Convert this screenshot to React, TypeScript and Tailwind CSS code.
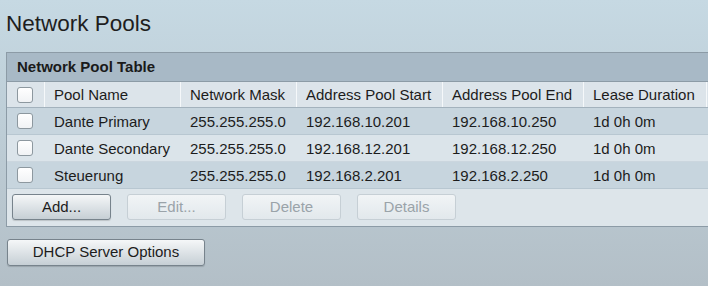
import React from 'react';

const COLS = ['Pool Name', 'Network Mask', 'Address Pool Start', 'Address Pool End', 'Lease Duration'];

const ROWS = [
  ['Dante Primary', '255.255.255.0', '192.168.10.201', '192.168.10.250', '1d 0h 0m'],
  ['Dante Secondary', '255.255.255.0', '192.168.12.201', '192.168.12.250', '1d 0h 0m'],
  ['Steuerung', '255.255.255.0', '192.168.2.201', '192.168.2.250', '1d 0h 0m'],
];

const gridCols = 'grid grid-cols-[37px_136px_116px_146px_141px_123px_1fr]';

const Checkbox = () => (
  <div className="w-[16px] h-[16px] rounded-[3px] border border-[#8d989f] bg-gradient-to-b from-white to-[#f1f3f5]" />
);

const Button = ({ label, disabled, className = '' }: { label: string; disabled?: boolean; className?: string }) => (
  <button
    className={
      disabled
        ? `h-[26px] rounded-[3px] border border-[#c6cfd5] bg-gradient-to-b from-[#f1f4f6] to-[#e2e8ec] text-[#9aa3a9] text-[15px] ${className}`
        : `h-[26px] rounded-[3px] border border-[#77838c] bg-gradient-to-b from-[#f5f7f8] to-[#c6cfd5] text-[#1c1c1c] text-[15px] shadow-[0_1px_1px_rgba(0,0,0,0.15)] ${className}`
    }
  >
    {label}
  </button>
);

export default function App() {
  return (
    <div
      className="w-[708px] h-[286px] overflow-hidden pl-[6px] pt-[11px] bg-gradient-to-b from-[#c6d9e3] to-[#b3bfc7] text-[#1c1c1c]"
      style={{ fontFamily: '"Liberation Sans", Arial, sans-serif' }}
    >
      <h1 className="text-[22.5px] leading-[26px] text-[#1e1e1e]">Network Pools</h1>

      <div className="mt-[15px] w-[760px] border border-[#8c9ba6]">
        <div className="h-[29px] flex items-center pl-[10px] pt-[1px] bg-[#a8b9c6] font-bold text-[15px] text-[#1a1a1a] border-b border-[#8c9ba6]">
          Network Pool Table
        </div>

        <div className={`${gridCols} h-[26px] bg-[#dce4ea] border-b border-[#a3b2bd] text-[15px]`}>
          <div className="flex items-center pl-[10px]">
            <Checkbox />
          </div>
          {COLS.map((c) => (
            <div key={c} className="flex items-center pl-[9px] pt-[2px] border-l border-[#f5f8fa]">
              {c}
            </div>
          ))}
          <div className="border-l border-[#f5f8fa]" />
        </div>

        {ROWS.map((r, i) => (
          <div
            key={r[0]}
            className={`${gridCols} h-[27px] text-[15px] border-b ${
              i === 1 ? 'bg-[#dbe4ea] border-[#cbd6de]' : 'bg-[#c7d5de] border-[#b8c7d1]'
            } ${i === 2 ? 'border-[#97a6b1]' : ''}`}
          >
            <div className="flex items-center pl-[10px]">
              <Checkbox />
            </div>
            {r.map((v, j) => (
              <div key={j} className="flex items-center pl-[10px] pt-[3px]">
                {v}
              </div>
            ))}
            <div />
          </div>
        ))}

        <div className="h-[37px] bg-[#dde5ea] flex gap-[16px] pl-[5px] pt-[5px]">
          <Button label="Add..." className="w-[99px]" />
          <Button label="Edit..." disabled className="w-[99px]" />
          <Button label="Delete" disabled className="w-[99px]" />
          <Button label="Details" disabled className="w-[99px]" />
        </div>
      </div>

      <Button label="DHCP Server Options" className="mt-[12px] ml-[1px] w-[198px] !h-[27px]" />
    </div>
  );
}
